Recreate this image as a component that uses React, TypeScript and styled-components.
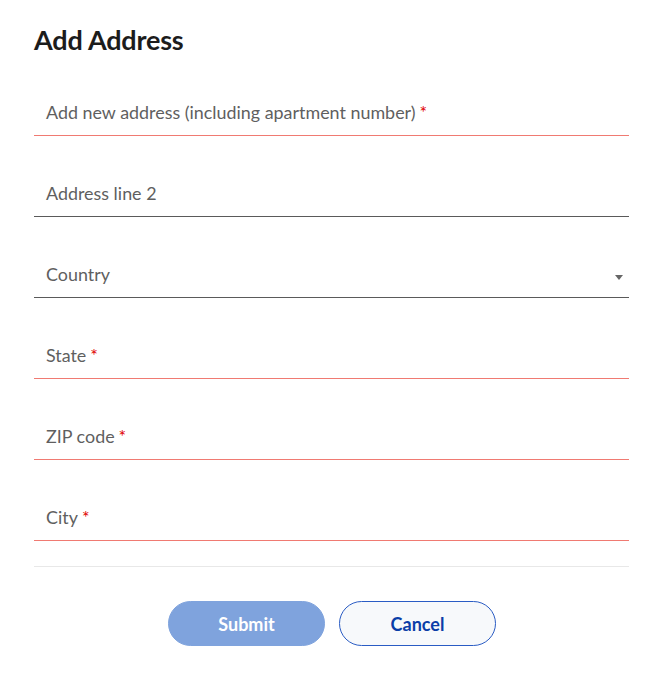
import React from "react";
import styled, { createGlobalStyle } from "styled-components";

const Global = createGlobalStyle`
  html, body { margin: 0; padding: 0; background: #fff; }
  body { font-family: Lato, "Open Sans", sans-serif; }
`;

const Page = styled.div`
  width: 666px;
  padding: 24px 37px 0 34px;
  box-sizing: border-box;
`;

const Title = styled.h1`
  margin: 0;
  font-size: 27px;
  font-weight: 700;
  color: #1c1c1c;
  line-height: 32px;
  letter-spacing: -0.2px;
`;

const Form = styled.div`
  display: flex;
  flex-direction: column;
  margin-top: 24px;
`;

const Field = styled.div<{ $error?: boolean }>`
  height: 80px;
  box-sizing: border-box;
  display: flex;
  align-items: flex-end;
  padding: 0 12px 12px 12px;
  border-bottom: 1px solid ${(p) => (p.$error ? "#f07a72" : "#5a5a5a")};
  & + & { margin-top: 1px; }
  &:first-child { height: 56px; }
`;

const Label = styled.span`
  font-size: 17.9px;
  line-height: 22px;
  color: #5f5f5f;
  flex: 1;
`;

const Star = styled.span`
  color: #e00000;
  margin-left: 4px;
`;

const Caret = styled.span`
  width: 0;
  height: 0;
  border-left: 4px solid transparent;
  border-right: 4px solid transparent;
  border-top: 5px solid #666;
  margin-right: -6px;
  margin-bottom: 5px;
`;

const Divider = styled.hr`
  border: none;
  border-top: 1px solid #e8e8e8;
  margin: 25px 0 0 0;
`;

const Actions = styled.div`
  display: flex;
  justify-content: center;
  gap: 14px;
  margin-top: 34px;
  padding-left: 1px;
`;

const Button = styled.button<{ $primary?: boolean }>`
  width: 157px;
  height: 45px;
  border-radius: 23px;
  font-family: Lato, sans-serif;
  font-size: 18px;
  font-weight: 700;
  cursor: pointer;
  border: 1px solid ${(p) => (p.$primary ? "#7fa3dd" : "#2a5cc4")};
  background: ${(p) => (p.$primary ? "#7fa3dd" : "#f7f9fb")};
  color: ${(p) => (p.$primary ? "#ffffff" : "#0b3ea8")};
`;

const fields: { label: string; required?: boolean; select?: boolean }[] = [
  { label: "Add new address (including apartment number)", required: true },
  { label: "Address line 2" },
  { label: "Country", select: true },
  { label: "State", required: true },
  { label: "ZIP code", required: true },
  { label: "City", required: true },
];

export default function App() {
  return (
    <>
      <Global />
      <Page>
        <Title>Add Address</Title>
        <Form>
          {fields.map((f) => (
            <Field key={f.label} $error={f.required}>
              <Label>
                {f.label}
                {f.required && <Star>*</Star>}
              </Label>
              {f.select && <Caret />}
            </Field>
          ))}
        </Form>
        <Divider />
        <Actions>
          <Button $primary>Submit</Button>
          <Button>Cancel</Button>
        </Actions>
      </Page>
    </>
  );
}
